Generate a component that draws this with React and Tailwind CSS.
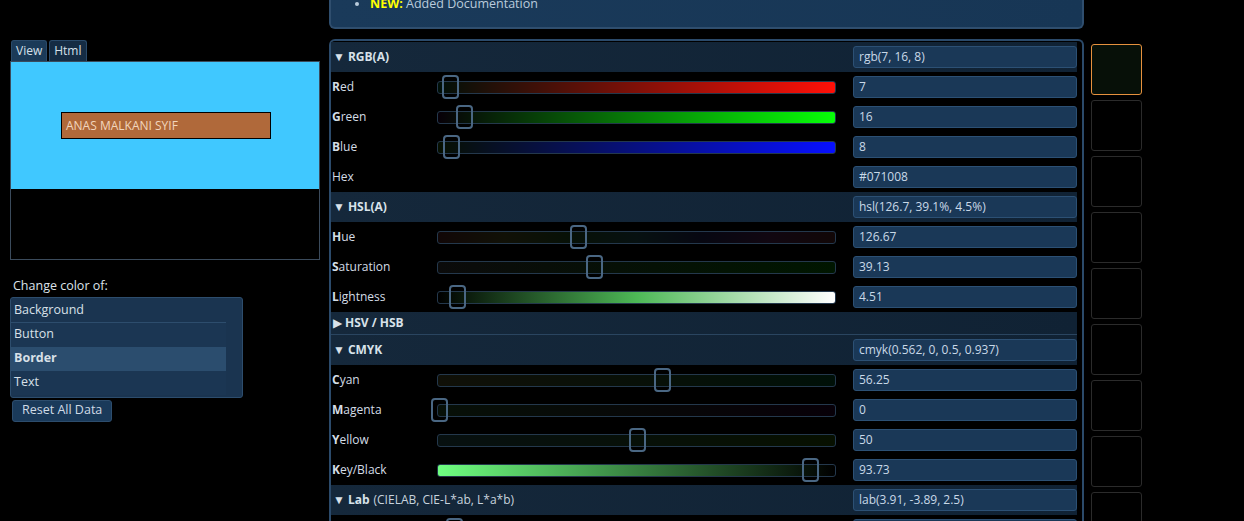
const font = { fontFamily: '"Open Sans", "Noto Sans", sans-serif' };

const sections = [
  {
    title: 'RGB(A)',
    value: 'rgb(7, 16, 8)',
    rows: [
      { label: 'Red', value: '7', frac: 7 / 255, track: 'bg-[linear-gradient(to_right,#001008,#ff1008)]' },
      { label: 'Green', value: '16', frac: 16 / 255, track: 'bg-[linear-gradient(to_right,#070008,#07ff08)]' },
      { label: 'Blue', value: '8', frac: 8 / 255, track: 'bg-[linear-gradient(to_right,#071000,#0710ff)]' },
      { label: 'Hex', value: '#071008', plain: true },
    ],
  },
  {
    title: 'HSL(A)',
    value: 'hsl(126.7, 39.1%, 4.5%)',
    rows: [
      {
        label: 'Hue',
        value: '126.67',
        frac: 126.67 / 360,
        track:
          'bg-[linear-gradient(to_right,#110707,#111107,#071107,#071111,#070711,#110711,#110707)]',
      },
      { label: 'Saturation', value: '39.13', frac: 0.3913, track: 'bg-[linear-gradient(to_right,#0b0b0b,#001600)]' },
      {
        label: 'Lightness',
        value: '4.51',
        frac: 0.0451,
        track: 'bg-[linear-gradient(to_right,#000000,#4db856_50%,#ffffff)]',
      },
    ],
  },
  { title: 'HSV / HSB', collapsed: true },
  {
    title: 'CMYK',
    value: 'cmyk(0.562, 0, 0.5, 0.937)',
    rows: [
      { label: 'Cyan', value: '56.25', frac: 0.5625, track: 'bg-[linear-gradient(to_right,#101008,#001008)]' },
      { label: 'Magenta', value: '0', frac: 0, track: 'bg-[linear-gradient(to_right,#071008,#070008)]' },
      { label: 'Yellow', value: '50', frac: 0.5, track: 'bg-[linear-gradient(to_right,#071010,#071000)]' },
      { label: 'Key/Black', value: '93.73', frac: 0.9373, track: 'bg-[linear-gradient(to_right,#6fff80,#000000)]' },
    ],
  },
  {
    title: 'Lab',
    sub: '(CIELAB, CIE-L*ab, L*a*b)',
    value: 'lab(3.91, -3.89, 2.5)',
    rows: [{ label: 'Lightness', value: '3.91', frac: 0.0391, track: 'bg-[linear-gradient(to_right,#000000,#ffffff)]' }],
  },
];

const Field = ({ value }) => (
  <div className="flex h-[22px] items-center rounded-[3px] border border-[#2c5074] bg-[#1a3857] pl-[5px] text-[12px] text-[#c9d9e8]">
    {value}
  </div>
);

const Slider = ({ frac, track }) => (
  <div className="relative h-[30px]">
    <div className={`absolute left-0 right-0 top-[9px] h-[13px] rounded-[3px] border border-[#24384c] ${track}`} />
    <div
      className="absolute top-[3px] h-[24px] w-[17px] rounded-[4px] border-2 border-[#4a6783]"
      style={{ left: Math.round(frac * 396) - 6 }}
    />
  </div>
);

const Header = ({ s }) => (
  <div
    className={`grid grid-cols-[505px_17px_224px] items-center bg-[linear-gradient(to_right,#15283b,#102234)] ${
      s.collapsed ? 'h-[23px] border-b border-[#2a4560]' : 'h-[30px]'
    }`}
  >
    <div className="flex items-center pl-[2px] text-[12px] text-[#d8e2ea]">
      <span className="mr-[3px] text-[12px] leading-none">{s.collapsed ? '▶' : '▼'}</span>
      <span className="font-bold">{s.title}</span>
      {s.sub && <span className="ml-[4px] text-[#c8d4de]">{s.sub}</span>}
    </div>
    <div />
    {s.value ? <Field value={s.value} /> : <div />}
  </div>
);

const Row = ({ r }) => (
  <div className="grid h-[30px] grid-cols-[106px_399px_17px_224px] items-center">
    <div className="pl-[1px] text-[12px] text-[#d4dde6]">
      {r.plain ? (
        r.label
      ) : (
        <>
          <span className="font-bold">{r.label[0]}</span>
          {r.label.slice(1)}
        </>
      )}
    </div>
    {r.plain ? <div /> : <Slider frac={r.frac} track={r.track} />}
    <div />
    <Field value={r.value} />
  </div>
);

const listItems = ['Background', 'Button', 'Border', 'Text'];

export default function App() {
  return (
    <div className="flex h-[521px] w-[1244px] overflow-hidden bg-black" style={font}>
      {/* left column */}
      <div className="w-[329px] shrink-0 pl-[10px] pt-[40px]">
        <div className="flex gap-[2px] pl-[1px]">
          <div className="flex h-[21px] items-center rounded-t-[3px] border border-b-0 border-[#2a4a6a] bg-[#1b3a58] px-[4px] text-[12px] text-[#d6e0ea]">
            View
          </div>
          <div className="flex h-[21px] items-center rounded-t-[3px] border border-b-0 border-[#2a4a6a] bg-[#152c44] px-[4px] text-[12px] text-[#d6e0ea]">
            Html
          </div>
        </div>
        <div className="h-[199px] w-[310px] border border-[#3b4b5c]">
          <div className="flex h-[127px] items-center bg-[#40c8ff] pl-[50px]">
            <div className="flex h-[27px] w-[210px] items-center border border-black bg-[#b0693a] pl-[4px] text-[12px] text-[#f2d6bd]">
              ANAS MALKANI SYIF
            </div>
          </div>
        </div>
        <div className="mt-[17px] pl-[3px] text-[12.5px] text-[#dde3ea]">Change color of:</div>
        <div className="mt-[1px] w-[233px] rounded-[3px] border border-[#2d4d6d] bg-[#1a3450] pb-[2px] pt-[1px]">
          {listItems.map((it, i) => (
            <div
              key={it}
              className={`flex h-[24px] w-[215px] items-center pl-[3px] text-[12.5px] text-[#d8e0e8] ${
                i === 0 ? 'border-b border-[#2d4d6d]' : ''
              } ${i === 2 ? 'bg-[#2b4d6e] font-bold' : i === 0 ? 'bg-[#1a3450]' : 'bg-[#1b3653]'}`}
            >
              {it}
            </div>
          ))}
        </div>
        <button
          type="button"
          className="ml-[2px] mt-[2px] flex h-[22px] items-center rounded-[3px] border border-[#2d4d6d] bg-[#1a3a5a] px-[9px] text-[12.5px] text-[#d0dbe6]"
        >
          Reset All Data
        </button>
      </div>

      {/* middle column */}
      <div className="w-[755px] shrink-0">
        <div className="flex h-[29px] flex-col rounded-b-md border-2 border-t-0 border-[#2f4e6e] bg-[linear-gradient(to_right,#1a3a5a,#173655)]">
          <ul className="-mt-[5px] list-disc pl-[39px] text-[12.5px] text-[#b9cbdc]">
            <li>
              <span className="font-bold text-[#ffff00]">NEW:</span> Added Documentation
            </li>
          </ul>
        </div>
        <div className="mt-[10px] rounded-t-md border-2 border-b-0 border-[#2b4a6a] pr-[5px] pt-[1px]">
          {sections.map((s) => (
            <div key={s.title}>
              <Header s={s} />
              {s.rows && s.rows.map((r) => <Row key={r.label} r={r} />)}
            </div>
          ))}
        </div>
      </div>

      {/* swatches */}
      <div className="ml-[7px] flex flex-col gap-[5px] pt-[44px]">
        {Array.from({ length: 9 }).map((_, i) => (
          <div
            key={i}
            className={`h-[51px] w-[51px] shrink-0 rounded-[3px] border ${
              i === 0 ? 'border-[#e6913e] bg-[#071008]' : 'border-[#2b2b2b] bg-black'
            }`}
          />
        ))}
      </div>
    </div>
  );
}
